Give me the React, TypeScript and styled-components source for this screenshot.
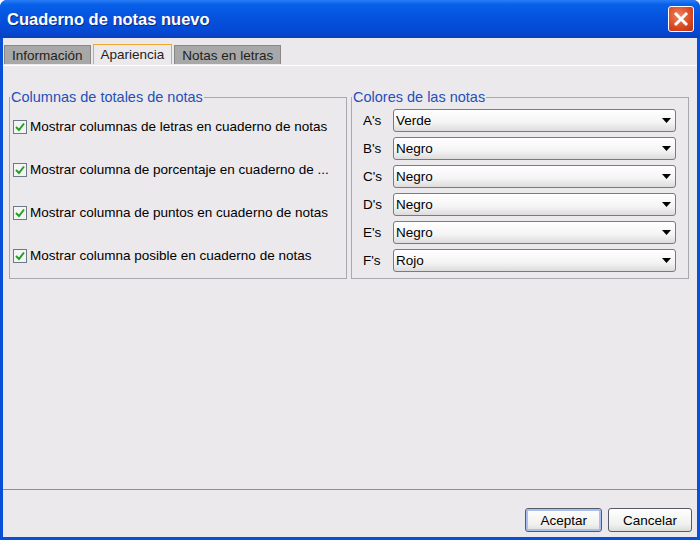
import React from 'react';
import styled, { createGlobalStyle } from 'styled-components';

const Global = createGlobalStyle`
  html, body { margin: 0; padding: 0; }
  body { font-family: "Liberation Sans", Arial, sans-serif; font-size: 13.5px; color: #000; }
`;

const Window = styled.div`
  width: 700px;
  height: 540px;
  box-sizing: border-box;
  display: flex;
  flex-direction: column;
  background: #0a4fd8;
  border-radius: 7px 7px 0 0;
  overflow: hidden;
`;

const TitleBar = styled.div`
  height: 38px;
  flex: none;
  display: flex;
  align-items: center;
  justify-content: space-between;
  padding: 0 6px 0 7px;
  background: linear-gradient(#2a7df6 0%, #0860e8 12%, #0451dd 50%, #0548d2 85%, #0a3fba 100%);
  color: #fff;
  font-size: 16.5px;
  font-weight: bold;
  text-shadow: 1px 1px 0 #0a2a80;
`;

const CloseButton = styled.div`
  width: 24px;
  height: 24px;
  border: 1px solid #fff;
  border-radius: 3px;
  background: radial-gradient(circle at 40% 35%, #f08060, #d8481e 60%, #b83010);
  display: flex;
  align-items: center;
  justify-content: center;
`;

const Body = styled.div`
  flex: 1;
  margin: 0 3px 3px 3px;
  background: #ecE9ec;
  display: flex;
  flex-direction: column;
`;

const Tabs = styled.div`
  display: flex;
  gap: 2px;
  padding: 6px 0 0 1px;
  height: 21px;
  border-bottom: 1px solid #fff;
`;

const Tab = styled.div<{ active?: boolean }>`
  height: ${p => (p.active ? '20px' : '19px')};
  margin-top: ${p => (p.active ? '0' : '1px')};
  padding: 0 7px;
  display: flex;
  align-items: center;
  box-sizing: border-box;
  background: ${p => (p.active ? '#ecE9ec' : '#a8a8a8')};
  border: 1px solid ${p => (p.active ? '#f0a830' : '#888')};
  border-bottom: none;
  color: #222;
`;

const Panel = styled.div`
  flex: 1;
  padding: 23px 8px 0 6px;
  display: flex;
  flex-direction: column;
`;

const Groups = styled.div`
  display: flex;
  gap: 4px;
`;

const Group = styled.fieldset`
  flex: 1;
  margin: 0;
  height: 190px;
  box-sizing: border-box;
  border: 1px solid #a8a8b0;
  padding: 6px 3px 0 3px;
`;

const Legend = styled.legend`
  color: #2550b8;
  font-size: 14.5px;
  padding: 0 1px;
  margin-left: -3px;
`;

const CheckRow = styled.label`
  display: flex;
  align-items: center;
  gap: 3px;
  height: 43px;
  &:first-of-type { margin-top: -6px; }
  white-space: nowrap;
`;

const Box = styled.span`
  width: 12px;
  height: 12px;
  border: 1px solid #6a7a8a;
  background: #f4f4f4;
  display: flex;
  align-items: center;
  justify-content: center;
`;

const ComboRow = styled.div`
  display: flex;
  align-items: center;
  height: 28px;
  &:first-of-type { margin-top: -5px; }
`;

const ComboLabel = styled.span`
  width: 38px;
  padding-left: 8px;
  box-sizing: border-box;
`;

const Combo = styled.div`
  flex: 1;
  height: 23px;
  margin-right: 9px;
  box-sizing: border-box;
  border: 1px solid #7a7a80;
  border-radius: 3px;
  background: linear-gradient(#ffffff, #f4f4f4 60%, #dcdcdc);
  display: flex;
  align-items: center;
  justify-content: space-between;
  padding: 0 4px 0 2px;
`;

const Footer = styled.div`
  border-top: 1px solid #909090;
  height: 48px;
  display: flex;
  justify-content: flex-end;
  align-items: flex-end;
  gap: 6px;
  padding: 0 5px 5px 0;
  box-sizing: border-box;
`;

const Button = styled.button<{ focused?: boolean }>`
  font: inherit;
  height: 24px;
  padding: 0 14px;
  border-radius: 3px;
  border: 1px solid #555a66;
  color: #000;
  background: linear-gradient(#fff, #f0f0ee 70%, #dcdcd8);
  box-shadow: ${p => (p.focused ? 'inset 0 0 0 2px #a8c0f0' : 'none')};
`;

const Check = () => (
  <svg width="10" height="10" viewBox="0 0 10 10">
    <path d="M1 5 L4 8 L9 1.5" stroke="#21a121" strokeWidth="2" fill="none" />
  </svg>
);

const checks = [
  'Mostrar columnas de letras en cuaderno de notas',
  'Mostrar columna de porcentaje en cuaderno de ...',
  'Mostrar columna de puntos en cuaderno de notas',
  'Mostrar columna posible en cuaderno de notas',
];

const colors: [string, string][] = [
  ["A's", 'Verde'],
  ["B's", 'Negro'],
  ["C's", 'Negro'],
  ["D's", 'Negro'],
  ["E's", 'Negro'],
  ["F's", 'Rojo'],
];

const App: React.FC = () => (
  <>
    <Global />
    <Window>
      <TitleBar>
        <span>Cuaderno de notas nuevo</span>
        <CloseButton>
          <svg width="16" height="16" viewBox="0 0 16 16">
            <path d="M2 2 L14 14 M14 2 L2 14" stroke="#fff" strokeWidth="3" />
          </svg>
        </CloseButton>
      </TitleBar>
      <Body>
        <Tabs>
          <Tab>Información</Tab>
          <Tab active>Apariencia</Tab>
          <Tab>Notas en letras</Tab>
        </Tabs>
        <Panel>
          <Groups>
            <Group>
              <Legend>Columnas de totales de notas</Legend>
              {checks.map(c => (
                <CheckRow key={c}>
                  <Box><Check /></Box>
                  {c}
                </CheckRow>
              ))}
            </Group>
            <Group>
              <Legend>Colores de las notas</Legend>
              {colors.map(([k, v]) => (
                <ComboRow key={k}>
                  <ComboLabel>{k}</ComboLabel>
                  <Combo>
                    <span>{v}</span>
                    <svg width="9" height="5" viewBox="0 0 9 5">
                      <path d="M0 0 H9 L4.5 5 Z" fill="#000" />
                    </svg>
                  </Combo>
                </ComboRow>
              ))}
            </Group>
          </Groups>
        </Panel>
        <Footer>
          <Button focused>Aceptar</Button>
          <Button>Cancelar</Button>
        </Footer>
      </Body>
    </Window>
  </>
);

export default App;
